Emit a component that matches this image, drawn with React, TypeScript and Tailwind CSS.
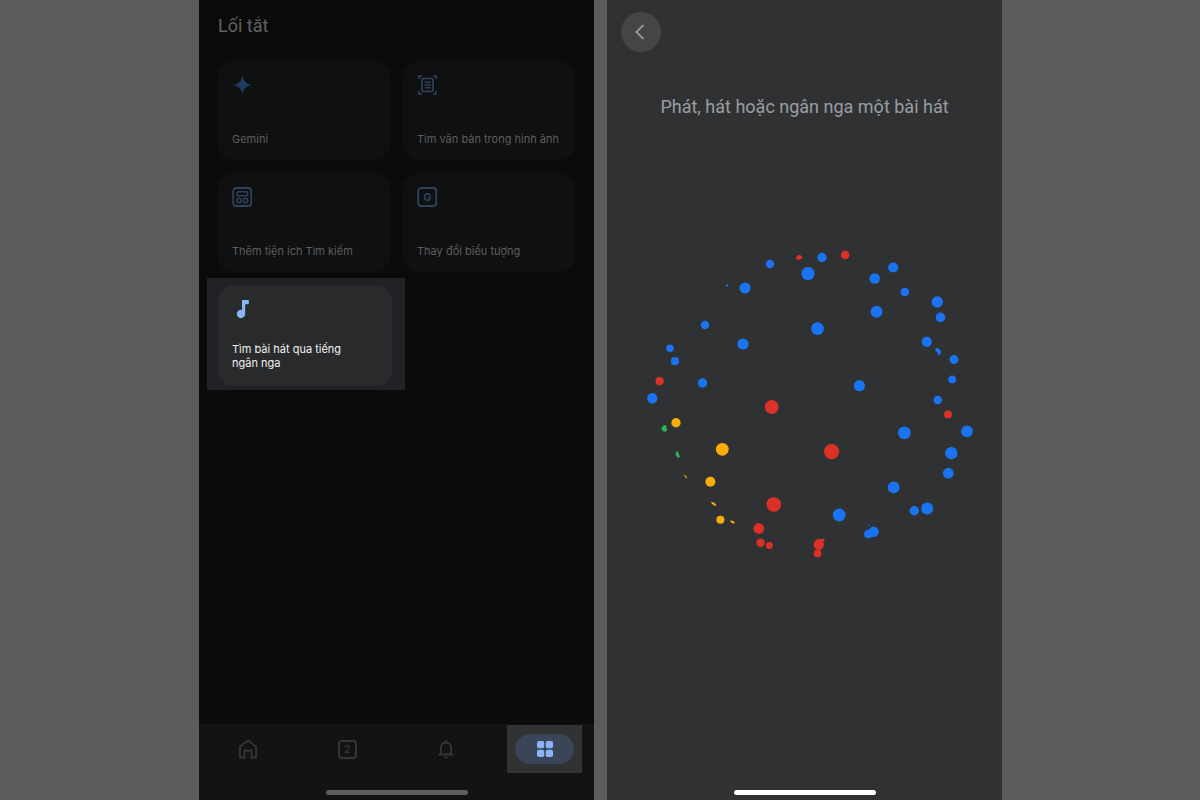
import clsx from "clsx";
import type { ReactNode } from "react";

const BLUE = "#1a73f0";
const RED = "#dc3127";
const YELLOW = "#fbac09";
const GREEN = "#2bb558";

// x, y, radius
const blueDots = [
  [770, 264, 4.3], [822, 257.5, 4.7], [808, 273.5, 6.6], [745, 288, 5.5],
  [705, 325, 4.2], [743, 344, 5.6], [670, 348.2, 3.8], [675, 361.2, 4.1],
  [702.5, 383, 4.7], [652.3, 398.2, 5.2], [893.2, 267.5, 5.1], [874.7, 278.5, 5.3],
  [904.8, 292, 4.3], [937.3, 302, 5.7], [940.5, 317.4, 4.8], [876.5, 311.7, 6],
  [817.5, 328.6, 6.4], [926.8, 341.8, 5.1], [954, 359.6, 4.5], [952.2, 379.4, 3.9],
  [937.7, 400, 4.3], [859.4, 385.7, 5.6], [904.4, 432.8, 6.4], [967, 431.4, 5.9],
  [951.3, 453.2, 6.2], [948.3, 473.2, 5.4], [893.7, 487.4, 5.9], [927.2, 508.6, 6],
  [914.3, 510.8, 4.7], [839.2, 515, 6.4], [873.6, 531.8, 5.2], [868.2, 534.2, 4.1],
];

const redDots = [
  [845.2, 255, 4.3], [659.6, 381.2, 4.1], [771.7, 407, 6.9], [948, 414.4, 3.9],
  [831.6, 451.6, 7.6], [773.8, 504.5, 7.3], [758.8, 528.4, 5.3], [760.6, 542.8, 4.3],
  [769.4, 545.4, 3.5], [818.8, 544.8, 5.2], [817.6, 553.5, 3.9],
];

const yellowDots = [
  [676, 422.8, 4.7], [722.3, 449.3, 6.4], [710.4, 481.7, 5], [720.4, 519.8, 4],
];

const dotGroups = [
  { color: BLUE, dots: blueDots },
  { color: RED, dots: redDots },
  { color: YELLOW, dots: yellowDots },
];

function GeminiIcon() {
  return (
    <svg viewBox="0 0 20 20" className="size-5" aria-hidden="true">
      <defs>
        <linearGradient id="gemini" x1="0" x2="1" y1="0.4" y2="0.6">
          <stop offset="0" stopColor="#33294f" />
          <stop offset="0.5" stopColor="#1f3d64" />
          <stop offset="1" stopColor="#174055" />
        </linearGradient>
      </defs>
      <path
        d="M10.500.5C11.500 6.300 14 8.800 20 10C14 11.200 11.500 13.700 10.500 19.500C9.500 13.700 7 11.200 1 10C7 8.800 9.500 6.300 10.500.5Z"
        fill="url(#gemini)"
      />
    </svg>
  );
}

function ScanTextIcon() {
  return (
    <svg viewBox="0 0 20 20" className="size-5" fill="none" stroke="currentColor" strokeWidth="1.7" aria-hidden="true">
      <path d="M2 4V1h3M16 1h3v3M19 16v3h-3M5 19H2v-3" />
      <rect x="5" y="3.5" width="11" height="13" rx="1.5" />
      <path d="M7.500 7.200h6M7.500 10h6M7.500 12.800h6" strokeWidth="1.5" />
    </svg>
  );
}

function WidgetIcon() {
  return (
    <svg viewBox="0 0 20 20" className="size-5" fill="none" stroke="currentColor" strokeWidth="1.5" aria-hidden="true">
      <rect x="1.2" y="1" width="18" height="18" rx="3" strokeWidth="1.8" />
      <rect x="4.8" y="4.8" width="11" height="4" rx="1.8" />
      <circle cx="7" cy="13.5" r="2.2" />
      <circle cx="13.6" cy="13.5" r="2.2" />
    </svg>
  );
}

function AppIconIcon() {
  return (
    <svg viewBox="0 0 20 20" className="size-5" aria-hidden="true">
      <rect x="1.2" y="1" width="18" height="18" rx="3" fill="none" stroke="currentColor" strokeWidth="1.8" />
      <text x="10.5" y="14" textAnchor="middle" fontSize="11" fontWeight="700" fill="currentColor">
        G
      </text>
    </svg>
  );
}

function NoteIcon() {
  return (
    <svg viewBox="0 0 20 20" className="size-5" fill="#8ab4f8" aria-hidden="true">
      <path d="M10 1h6.800v4.200h-3.600v9.800a4.200 4.200 0 1 1-3.200-4.100Z" />
    </svg>
  );
}

const shortcuts = [
  { label: "Gemini", icon: <GeminiIcon /> },
  { label: "Tìm văn bản trong hình ảnh", icon: <ScanTextIcon /> },
  { label: "Thêm tiện ích Tìm kiếm", icon: <WidgetIcon /> },
  { label: "Thay đổi biểu tượng", icon: <AppIconIcon /> },
];

type CardProps = { label: string; icon: ReactNode; active?: boolean };

function ShortcutCard({ label, icon, active }: CardProps) {
  return (
    <button
      type="button"
      className={clsx(
        "flex w-full flex-col items-start justify-between rounded-2xl p-[14px] text-left text-[11px] leading-[14px]",
        active
          ? "min-h-[101px] bg-[#292a2c] pb-4 text-[#f1f1f1]"
          : "min-h-[99px] bg-[#0f1011] text-[#5e5e5f]",
      )}
    >
      <span className="text-[#30415c]">{icon}</span>
      <span className={active ? "max-w-32" : "whitespace-nowrap"}>{label}</span>
    </button>
  );
}

function HomeBar({ className }: { className: string }) {
  return <div className={clsx("mx-auto mb-[5px] h-[5px] w-[142px] rounded-full", className)} />;
}

function BottomNav() {
  return (
    <footer className="mt-auto bg-[#121315] pt-px">
      <nav className="grid grid-cols-4 text-[#353638]">
        <button type="button" aria-label="Home" className="flex h-12 items-center justify-center">
          <svg viewBox="0 0 20 20" className="size-5" fill="none" stroke="currentColor" strokeWidth="1.8">
            <path d="M2 18.500V7.500L10 1.500l8 6v11h-4.500v-7h-7v7Z" />
          </svg>
        </button>
        <button type="button" aria-label="Tabs" className="flex h-12 items-center justify-center">
          <span className="flex size-[19px] items-center justify-center rounded-[4px] border-2 border-current text-[11px] leading-none font-semibold">
            2
          </span>
        </button>
        <button type="button" aria-label="Notifications" className="flex h-12 items-center justify-center">
          <svg viewBox="0 0 20 20" className="size-5" fill="none" stroke="currentColor" strokeWidth="1.8">
            <path d="M2.500 15.500h15M5 15.500V8.500a5 5 0 0 1 10 0v7M10 3.500V1" />
            <path d="M8 17.500h4a2 2 0 0 1-4 0Z" fill="currentColor" stroke="none" />
          </svg>
        </button>
        <div className="flex h-12 justify-center">
          <button
            type="button"
            aria-label="Shortcuts"
            className="flex w-[75px] items-center justify-center bg-[#313234]"
          >
            <span className="flex h-[30px] w-[59px] items-center justify-center rounded-full bg-[#3a4557]">
              <svg viewBox="0 0 16 16" className="size-4" fill="#8ab4f8">
                <rect width="7.2" height="7.2" rx="1.8" />
                <rect x="8.8" width="7.2" height="7.2" rx="1.8" />
                <rect y="8.8" width="7.2" height="7.2" rx="1.8" />
                <rect x="8.8" y="8.8" width="7.2" height="7.2" rx="1.8" />
              </svg>
            </span>
          </button>
        </div>
      </nav>
      <HomeBar className="mt-[17px] bg-[#606060]" />
    </footer>
  );
}

function ShortcutsScreen() {
  return (
    <section className="col-start-2 flex flex-col bg-[#0b0b0b]">
      <h1 className="px-[19px] pt-[14px] font-['Roboto','Open_Sans',sans-serif] text-lg leading-6 text-[#626262]">
        Lối tắt
      </h1>
      <div className="mt-[23px] grid grid-cols-2 gap-[13px] px-[19px]">
        {shortcuts.map((item) => (
          <ShortcutCard key={item.label} label={item.label} icon={item.icon} />
        ))}
        {/* Spotlight around the hum-to-search shortcut */}
        <div className="-mt-[7px] -mr-[15px] -ml-[11px] bg-[#212225] pt-[7px] pr-[13px] pb-1 pl-[11px]">
          <ShortcutCard label="Tìm bài hát qua tiếng ngân nga" icon={<NoteIcon />} active />
        </div>
      </div>
      <BottomNav />
    </section>
  );
}

function ParticleSphere() {
  return (
    <svg viewBox="607 240 395 330" className="w-full" aria-hidden="true">
      {dotGroups.map(({ color, dots }) => (
        <g key={color} fill={color}>
          {dots.map(([x, y, r]) => (
            <circle key={`${x}-${y}`} cx={x} cy={y} r={r} />
          ))}
        </g>
      ))}
      {/* Dots turning away at the rim */}
      <g fill={BLUE}>
        <path d="M725.300 285.500l3-1.500-.5 3Z" />
        <path d="M935.500 348l2.500.2c2 .8 3.300 2.300 3 4-.3 2-1.500 3-3 3l-.5-3-2-1Z" />
        <path d="M866.500 526l4-1.800-.5 1.300Z" />
      </g>
      <g fill={RED}>
        <path d="M796 259c0-2.500 1.500-4 3.300-4s3.200 1.500 3 3.500l-3 1-1.500.5Z" />
        <path d="M815 539.500l10-.8-2.500 4.500Z" />
      </g>
      <g fill={GREEN}>
        <path d="M661.500 428l2-2.500 2.500-.5.500 3 .8 2.500-2.200 1.300c-2 0-3.600-1.500-3.600-3.800Z" />
        <path d="M676 452l2-1 .8 3 1.200 3-1.500.8c-2.500-1.200-3.500-3.500-2.500-5.800Z" />
      </g>
      <g fill={YELLOW}>
        <path d="M684 474.500c1.500.5 2.800 2 3 4-1.500-.5-2.500-2-3-4Z" />
        <path d="M711 501.500c2 .3 4.500 1.700 5.500 4-2 .8-5-.8-5.500-4Z" />
        <path d="M730 520.500l2.500.3 2.800 2c-1.500 1.700-4.500.4-5.300-2.300Z" />
      </g>
    </svg>
  );
}

function ListeningScreen() {
  return (
    <section className="col-start-4 flex flex-col bg-[#303133]">
      <header className="px-[14px] pt-3">
        <button
          type="button"
          aria-label="Back"
          className="flex size-10 items-center justify-center rounded-full bg-[#434547] text-[#a2a5a9]"
        >
          <svg viewBox="0 0 16 16" className="size-4" fill="none" stroke="currentColor" strokeWidth="1.7">
            <path d="M10.500 1 3.500 8l7 7" />
          </svg>
        </button>
      </header>
      <p className="mt-[43px] mb-[121px] text-center font-['Roboto','Open_Sans',sans-serif] text-lg leading-6 whitespace-nowrap text-[#9a9da2]">
        Phát, hát hoặc ngân nga một bài hát
      </p>
      <ParticleSphere />
      <HomeBar className="mt-auto bg-white" />
    </section>
  );
}

export default function App() {
  return (
    <main className="grid min-h-screen grid-cols-[199fr_395fr_13fr_395fr_198fr] bg-[#5c5c5c] font-['Inter','Open_Sans',sans-serif]">
      <ShortcutsScreen />
      <ListeningScreen />
    </main>
  );
}
